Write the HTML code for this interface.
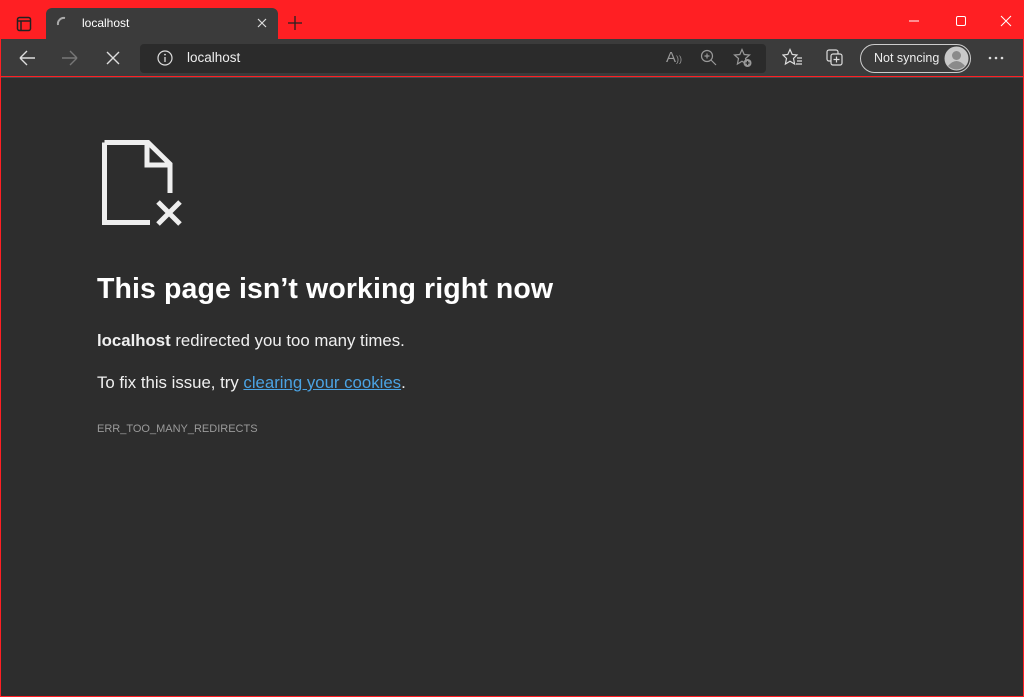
<!DOCTYPE html>
<html><head><meta charset="utf-8"><style>
*{margin:0;padding:0;box-sizing:border-box}
body{width:1024px;height:697px;overflow:hidden;background:#ff1f23;font-family:"Liberation Sans",sans-serif;position:relative}
.tb{position:absolute;left:1px;top:39px;width:1022px;height:37px;background:#3b3b3b}
.tab{position:absolute;left:46px;top:8px;width:232px;height:32px;background:#3b3b3b;border-radius:6px 6px 0 0}
.page{position:absolute;left:1px;top:77px;width:1022px;height:619px;background:#2d2d2d;border-top:1px solid #4a4a4a}
.addr{position:absolute;left:140px;top:44px;width:626px;height:29px;background:#2b2b2b;border-radius:4px}
.t{position:absolute;color:#fff;white-space:nowrap}
svg{position:absolute}
</style></head><body>
<svg style="left:16px;top:16px" width="16" height="16"><rect x="1.5" y="1.5" width="13" height="13" rx="2" fill="none" stroke="#222" stroke-width="1.5"/><line x1="1.5" y1="5" x2="14.5" y2="5" stroke="#222" stroke-width="1.5"/><line x1="5" y1="5" x2="5" y2="14.5" stroke="#222" stroke-width="1.5"/></svg>
<div class="tab"></div>
<svg style="left:56px;top:16px" width="12" height="12"><path d="M2 9 A6 6 0 0 1 9 2" fill="none" stroke="#aaa" stroke-width="2"/></svg>
<div class="t" style="left:82px;top:16px;font-size:12px">localhost</div>
<svg style="left:256px;top:17px" width="12" height="12"><path d="M2 2L10 10M10 2L2 10" stroke="#ddd" stroke-width="1.2"/></svg>
<svg style="left:287px;top:15px" width="16" height="16"><path d="M8 1V15M1 8H15" stroke="#222" stroke-width="1.3"/></svg>
<svg style="left:905px;top:15px" width="110" height="12"><path d="M4 6H14" stroke="#fff"/><rect x="51.5" y="1.5" width="9" height="9" rx="1.5" fill="none" stroke="#fff"/><path d="M96 1L106 11M106 1L96 11" stroke="#fff"/></svg>
<div class="tb"></div>
<div class="addr"></div>
<svg style="left:18px;top:49px" width="20" height="18"><path d="M2 9H17M2 9L9 2M2 9L9 16" fill="none" stroke="#ddd" stroke-width="1.4"/></svg>
<svg style="left:60px;top:49px" width="20" height="18"><path d="M2 9H17M17 9L10 2M17 9L10 16" fill="none" stroke="#777" stroke-width="1.4"/></svg>
<svg style="left:105px;top:50px" width="16" height="16"><path d="M2 2L14 14M14 2L2 14" stroke="#ddd" stroke-width="1.4"/></svg>
<svg style="left:157px;top:50px" width="16" height="16"><circle cx="8" cy="8" r="7" fill="none" stroke="#ddd" stroke-width="1.2"/><path d="M8 7V12" stroke="#ddd" stroke-width="1.3"/><circle cx="8" cy="4.6" r="0.9" fill="#ddd"/></svg>
<div class="t" style="left:187px;top:50px;font-size:13.5px;color:#eee">localhost</div>
<div class="t" style="left:666px;top:49px;font-size:15px;color:#999">A<span style="font-size:9px">))</span></div>
<svg style="left:700px;top:49px" width="18" height="18"><circle cx="7" cy="7" r="5.5" fill="none" stroke="#999" stroke-width="1.2"/><path d="M11 11L16 16M7 4.5V9.5M4.5 7H9.5" stroke="#999" stroke-width="1.2"/></svg>
<svg style="left:733px;top:48px" width="20" height="20"><path d="M9 1.5L11.2 6.5L16.5 7L12.5 10.5L13.6 16L9 13.2L4.4 16L5.5 10.5L1.5 7L6.8 6.5Z" fill="none" stroke="#999" stroke-width="1.2"/><circle cx="14.5" cy="15" r="4" fill="#999"/><path d="M14.5 13V17M12.5 15H16.5" stroke="#2b2b2b" stroke-width="1.2"/></svg>
<svg style="left:782px;top:48px" width="22" height="20"><path d="M8 1.5L10.2 6.5L15 7L11.5 10.5L12.6 16L8 13.2L3.4 16L4.5 10.5L1 7L5.8 6.5Z" fill="none" stroke="#ddd" stroke-width="1.2"/><path d="M15 10H20M15 13H20M14 16H20" stroke="#ddd" stroke-width="1.2"/></svg>
<svg style="left:825px;top:48px" width="20" height="20"><rect x="2" y="2" width="11" height="11" rx="2" fill="none" stroke="#ddd" stroke-width="1.2"/><rect x="6" y="6" width="11" height="11" rx="2" fill="#3b3b3b" stroke="#ddd" stroke-width="1.2"/><path d="M11.5 8.5V14.5M8.5 11.5H14.5" stroke="#ddd" stroke-width="1.2"/></svg>
<div style="position:absolute;left:860px;top:44px;width:111px;height:29px;border:1px solid #ccc;border-radius:15px"></div>
<div class="t" style="left:874px;top:51px;font-size:12.5px;color:#eee">Not syncing</div>
<svg style="left:944px;top:46px" width="25" height="25"><circle cx="12.5" cy="12.5" r="12" fill="#c9c9c9"/><circle cx="12.5" cy="9.5" r="4.5" fill="#8a8a8a"/><path d="M4 20Q12.5 10 21 20Q12.5 27 4 20Z" fill="#8a8a8a"/></svg>
<svg style="left:988px;top:56px" width="16" height="4"><circle cx="2" cy="2" r="1.3" fill="#ddd"/><circle cx="8" cy="2" r="1.3" fill="#ddd"/><circle cx="14" cy="2" r="1.3" fill="#ddd"/></svg>
<div class="page"></div>
<svg style="left:100px;top:138px" width="90" height="92"><path d="M4.5 4.5H48L70 26V55M50 84.5H4.5V4.5" fill="none" stroke="#eee" stroke-width="5"/><path d="M47 6V27H69" fill="none" stroke="#eee" stroke-width="5"/><path d="M58 64L80 86M80 64L58 86" stroke="#eee" stroke-width="5"/></svg>
<div class="t" style="left:97px;top:273px;font-size:28.5px;font-weight:bold;letter-spacing:0.1px">This page isn’t working right now</div>
<div class="t" style="left:97px;top:331px;font-size:16.8px;color:#f0f0f0"><b>localhost</b> redirected you too many times.</div>
<div class="t" style="left:97px;top:373px;font-size:16.8px;color:#f0f0f0">To fix this issue, try <span style="color:#4ba3e3;text-decoration:underline">clearing your cookies</span>.</div>
<div class="t" style="left:97px;top:423px;font-size:11px;color:#9a9a9a">ERR_TOO_MANY_REDIRECTS</div>
</body></html>
